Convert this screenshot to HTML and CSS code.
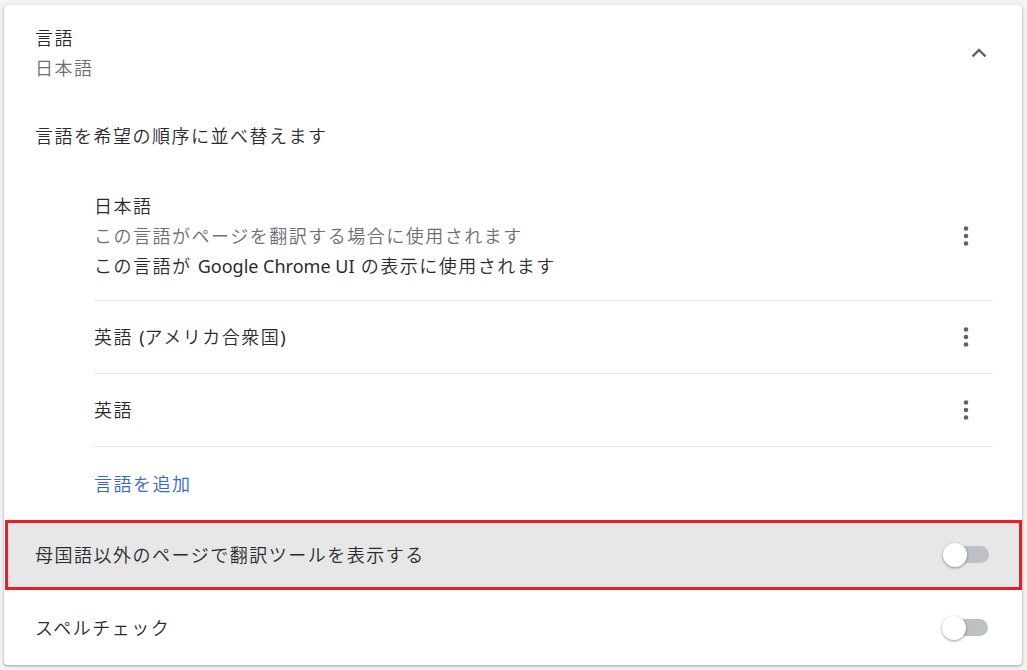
FILE: index.html
```html
<!DOCTYPE html>
<html lang="ja">
<head>
<meta charset="utf-8">
<link rel="stylesheet" href="styles.css">
</head>
<body>
<div class="card">
  <div class="header">
    <div class="htext">
      <div class="line">言語</div>
      <div class="line sub">日本語</div>
    </div>
    <svg class="chevron" width="16" height="10" viewBox="0 0 16 10"><path d="M1.5 8.5 L8 2 L14.5 8.5" fill="none" stroke="#5f6368" stroke-width="2.4"/></svg>
  </div>
  <div class="desc line">言語を希望の順序に並べ替えます</div>
  <div class="langs">
    <div class="lang first">
      <div class="ltext">
        <div class="line">日本語</div>
        <div class="line sub">この言語がページを翻訳する場合に使用されます</div>
        <div class="line">この言語が <span class="lat">Google Chrome UI</span> の表示に使用されます</div>
      </div>
      <svg class="dots" width="24" height="24" viewBox="0 0 24 24"><circle cx="12" cy="4.5" r="2.3"/><circle cx="12" cy="12" r="2.3"/><circle cx="12" cy="19.5" r="2.3"/></svg>
    </div>
    <div class="lang">
      <div class="ltext"><div class="line">英語 <span class="lat">(</span>アメリカ合衆国<span class="lat">)</span></div></div>
      <svg class="dots" width="24" height="24" viewBox="0 0 24 24"><circle cx="12" cy="4.5" r="2.3"/><circle cx="12" cy="12" r="2.3"/><circle cx="12" cy="19.5" r="2.3"/></svg>
    </div>
    <div class="lang">
      <div class="ltext"><div class="line">英語</div></div>
      <svg class="dots" width="24" height="24" viewBox="0 0 24 24"><circle cx="12" cy="4.5" r="2.3"/><circle cx="12" cy="12" r="2.3"/><circle cx="12" cy="19.5" r="2.3"/></svg>
    </div>
    <div class="add line">言語を追加</div>
  </div>
  <div class="row hl">
    <div class="line">母国語以外のページで翻訳ツールを表示する</div>
    <div class="toggle"><span class="track"></span><span class="knob"></span></div>
  </div>
  <div class="row spell">
    <div class="line">スペルチェック</div>
    <div class="toggle"><span class="track"></span><span class="knob"></span></div>
  </div>
</div>
</body>
</html>
```

FILE: styles.css
```css
html, body {
  margin: 0;
  padding: 0;
}
body {
  background: #f3f3f3;
  padding: 5px 5px 5px 4px;
  font-family: "Noto Sans", "Noto Sans CJK JP", sans-serif;
  font-size: 18px;
  font-weight: 350;
  letter-spacing: 1.5px;
  color: #2a2b2e;
}
.card {
  width: 1018px;
  height: 660px;
  background: #fff;
  border-radius: 4px;
  box-shadow: 0 1px 2px rgba(60, 64, 67, 0.3), 0 1px 3px 1px rgba(60, 64, 67, 0.15);
  overflow: hidden;
  box-sizing: border-box;
}
.line {
  line-height: 30px;
  height: 30px;
  white-space: nowrap;
}
.lat {
  letter-spacing: 0;
  font-weight: 400;
}
.sub {
  color: #6b6f73;
}
.header {
  display: flex;
  align-items: center;
  justify-content: space-between;
  padding: 18px 35px 0 31px;
}
.chevron {
  display: block;
}
.desc {
  margin-top: 38px;
  padding-left: 31px;
}
.langs {
  margin: 20px 29px 0 90px;
}
.lang {
  display: flex;
  align-items: center;
  justify-content: space-between;
  padding: 21px 0 21px;
  border-bottom: 1px solid #e6e7e8;
}
.lang.first {
  padding: 20px 0 19px;
}
.dots {
  display: block;
  fill: #5f6368;
  margin-right: 15px;
}
.add {
  padding: 22px 0 21px;
  color: #3367d6;
}
.row {
  display: flex;
  align-items: center;
  justify-content: space-between;
  box-sizing: border-box;
}
.hl {
  height: 70px;
  margin-left: 1px;
  border: 3px solid #ed1c24;
  background: #e7e7e7;
  padding: 0 30px 0 27px;
}
.spell {
  height: 75px;
  padding: 0 34px 0 31px;
}
.toggle {
  position: relative;
  width: 46px;
  height: 24px;
}
.track {
  position: absolute;
  left: 6px;
  right: 0;
  top: 3px;
  height: 17px;
  border-radius: 9px;
  background: #bdc1c6;
}
.knob {
  position: absolute;
  left: 0;
  top: 0;
  width: 24px;
  height: 24px;
  border-radius: 50%;
  background: #fff;
  box-shadow: 0 1px 3px rgba(0, 0, 0, 0.4);
}
```
